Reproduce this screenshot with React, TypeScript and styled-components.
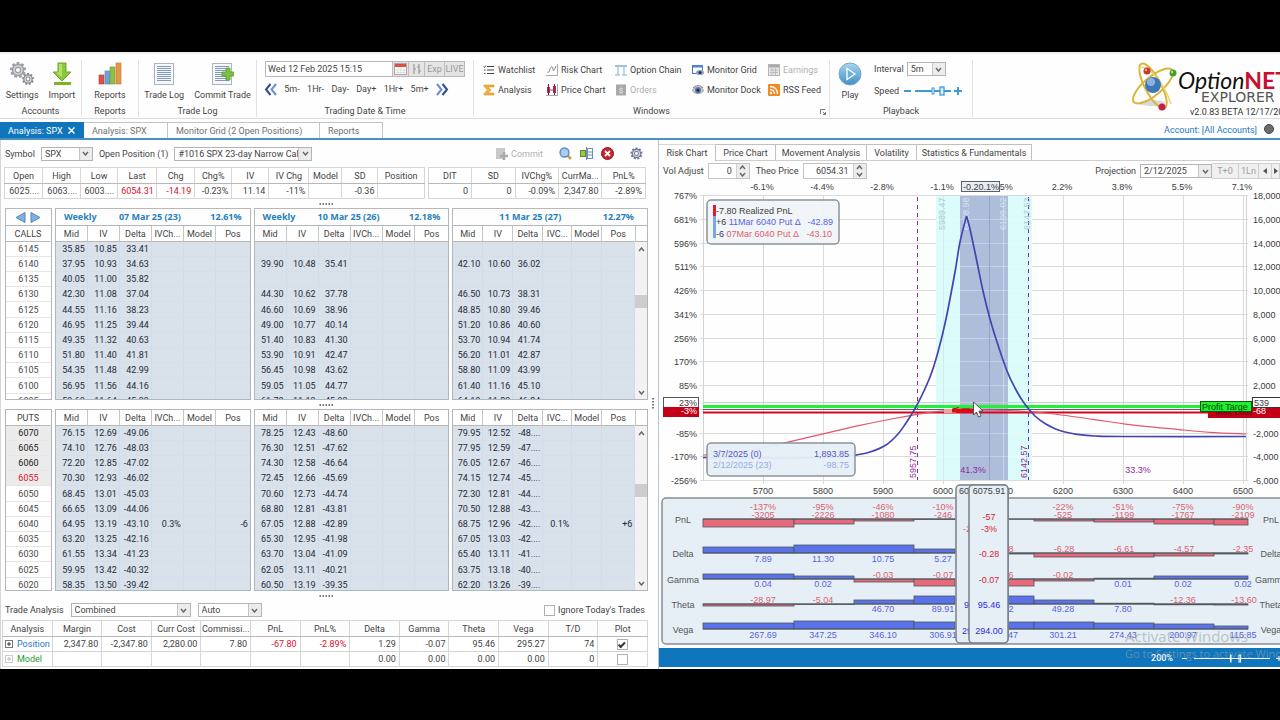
import React from 'react';
import styled, { createGlobalStyle, css } from 'styled-components';

const Global = createGlobalStyle`
  *, *::before, *::after { box-sizing: border-box; }
  body { margin: 0; background: #000; }
  body, button, input, select, table {
    font-family: Roboto, "Noto Sans", sans-serif;
    font-size: 9px;
    line-height: 12px;
    color: #444;
  }
  button { border: 0; padding: 0; margin: 0; background: none; cursor: pointer; }
  svg { display: block; flex: none; }
`;

const BLUE = '#0f76bd';

/* ---------- shell ---------- */
const Screen = styled.div`
  min-height: 100vh;
  padding: 52px 0 51px;
  background: #000;
  overflow: hidden;
`;
const Window = styled.div`
  display: flex;
  flex-direction: column;
  background: #fefefe;
  overflow: hidden;
`;

/* ---------- ribbon ---------- */
const Ribbon = styled.header`
  display: flex;
  height: 67px;
  padding-top: 8px;
  border-bottom: 1px solid #dcdcdc;
  box-shadow: inset 0 3px 0 -1px #efefef;
  overflow: hidden;
`;
const Group = styled.section<{ $w: number }>`
  flex: none;
  width: ${p => p.$w}px;
  height: 57px;
  display: flex;
  flex-direction: column;
  justify-content: space-between;
  border-right: 1px solid #e2e2e2;
  position: relative;
`;
const GroupTitle = styled.div`
  text-align: center;
  line-height: 12px;
`;
const BigRow = styled.div<{ $gap?: number }>`
  display: flex;
  justify-content: center;
  gap: ${p => p.$gap ?? 10}px;
`;
const BigButton = styled.button`
  display: flex;
  flex-direction: column;
  align-items: center;
  gap: 3px;
  white-space: nowrap;
  padding-top: 2px;
`;
const DateRow = styled.div`
  display: flex;
  height: 16px;
  margin: 1px 8px 0;
  border: 1px solid #b9b9b9;
`;
const DateInput = styled.input`
  flex: 1;
  min-width: 0;
  border: 0;
  padding: 0 2px;
  background: #fff;
`;
const DateButton = styled.button<{ $w: number }>`
  width: ${p => p.$w}px;
  display: flex;
  align-items: center;
  justify-content: center;
  background: #e4e4e4;
  border-left: 1px solid #bdbdbd;
  color: #9a9a9a;
`;
const StepRow = styled.div`
  display: flex;
  align-items: center;
  justify-content: space-between;
  padding: 0 24px 0 7px;
  height: 16px;
`;
const Stack = styled.div`
  display: flex;
  flex-direction: column;
  gap: 4px;
`;
const LinkGrid = styled.div`
  display: grid;
  grid-template-columns: 63px 69px 77px 76px auto;
  grid-auto-rows: 16px;
  row-gap: 4px;
  padding: 2px 0 0 9px;
`;
const SmallButton = styled.button<{ $off?: boolean }>`
  display: flex;
  align-items: center;
  gap: 3px;
  white-space: nowrap;
  color: ${p => (p.$off ? '#b0b0b0' : '#3f3f3f')};
`;
const Launcher = styled.button`
  position: absolute;
  right: 3px;
  bottom: 2px;
`;
const PlayBody = styled.div`
  display: flex;
  gap: 12px;
  padding-left: 8px;
`;
const Line = styled.div<{ $gap?: number }>`
  display: flex;
  align-items: center;
  gap: ${p => p.$gap ?? 4}px;
  height: 18px;
`;
const Brand = styled.div`
  margin-left: auto;
  flex: none;
  width: 150px;
  display: flex;
  overflow: hidden;
`;
const BrandText = styled.div`
  display: flex;
  flex-direction: column;
  padding: 8px 0 0 0;
  white-space: nowrap;
`;
const BrandName = styled.div`
  font: italic 23px/24px Lato, sans-serif;
  color: #111;
  b { font-style: normal; font-weight: 700; color: #c8102e; }
`;
const BrandSub = styled.div`
  font: 14px/10px "DejaVu Sans", sans-serif;
  color: #555;
  padding-left: 23px;
`;
const BrandVersion = styled.div`
  margin-top: 4px;
  padding-left: 12px;
  color: #333;
`;

/* ---------- document tabs ---------- */
const DocBar = styled.nav`
  display: flex;
  height: 21px;
  padding-top: 3px;
  border-bottom: 2px solid #4a90c0;
`;
const DocTab = styled.button<{ $w: number; $on?: boolean }>`
  width: ${p => p.$w}px;
  padding: 0 8px;
  text-align: left;
  white-space: nowrap;
  display: flex;
  align-items: center;
  justify-content: space-between;
  border: 1px solid #c4c4c4;
  border-width: 1px 1px 0 0;
  color: #707070;
  ${p => p.$on && css`background: ${BLUE}; color: #fff; border-color: ${BLUE};`}
`;
const Account = styled.a`
  margin-left: auto;
  padding-right: 7px;
  color: #2479bd;
  text-decoration: none;
  line-height: 16px;
`;
const Dot = styled.span`
  width: 10px;
  height: 10px;
  margin: 2px 6px 0 0;
  border-radius: 50%;
  background: #6d6d6d;
  border: 1px solid #444;
`;

/* ---------- work area ---------- */
const Work = styled.main`
  display: grid;
  grid-template-columns: minmax(0, 658fr) minmax(0, 622fr);
`;
const Left = styled.div`
  display: flex;
  flex-direction: column;
  padding: 0 10px 0 4px;
  position: relative;
  border-left: 1px solid #d5d5d5;
`;
const Toolbar = styled.div`
  display: flex;
  align-items: center;
  height: 27px;
  gap: 6px;
`;
const ToolActions = styled.div`
  margin-left: auto;
  display: flex;
  align-items: center;
  gap: 8px;
  padding-right: 5px;
`;
const Picker = styled.span<{ $w: number }>`
  display: inline-flex;
  position: relative;
  width: ${p => p.$w}px;
  height: 14px;
  border: 1px solid #b4b4b4;
  background: #fff;
  select {
    appearance: none;
    border: 0;
    width: 100%;
    padding: 0 13px 0 3px;
    background: transparent;
    outline: 0;
  }
`;
const PickerArrow = styled.span`
  position: absolute;
  right: 0;
  top: 0;
  bottom: 0;
  width: 13px;
  display: flex;
  align-items: center;
  justify-content: center;
  background: #ececec;
  border-left: 1px solid #c4c4c4;
  pointer-events: none;
`;
const Label = styled.label`
  white-space: nowrap;
`;

const Quotes = styled.div`
  display: grid;
  grid-template-columns: minmax(0, 420fr) minmax(0, 218fr);
  gap: 3px;
  margin: 0 2px 0 -1px;
`;
const DataTable = styled.table`
  width: 100%;
  table-layout: fixed;
  border-collapse: collapse;
  border: 1px solid #b8b8b8;
  background: #fff;
  th, td {
    height: 15px;
    padding: 0 3px;
    overflow: hidden;
    white-space: nowrap;
    border: 1px solid #d6d6d6;
    line-height: 12px;
  }
  th { height: 16px; font-weight: 400; text-align: center; padding: 0; border-bottom-color: #b8b8b8; }
  td { text-align: right; }
`;
const Red = styled.span`
  color: #e0102c;
`;
const Grip = styled.div<{ $h: number }>`
  height: ${p => p.$h}px;
  display: flex;
  align-items: center;
  justify-content: center;
`;

const Chain = styled.div`
  display: grid;
  grid-template-columns: minmax(0, 47fr) repeat(3, minmax(0, 196fr));
  column-gap: 3px;
`;
const ExpiryHead = styled.div<{ $lead: number; $end: number }>`
  height: 17px;
  display: grid;
  grid-template-columns: ${p => p.$lead}px 1fr auto;
  align-items: center;
  padding: 0 ${p => p.$end}px 0 8px;
  border: 1px solid #b8b8b8;
  border-bottom: 0;
  font-family: "Noto Sans", sans-serif;
  font-weight: 700;
  color: #2580bd;
  white-space: nowrap;
`;
const ArrowHead = styled.div`
  height: 17px;
  display: flex;
  align-items: center;
  justify-content: center;
  gap: 4px;
  border: 1px solid #b8b8b8;
  border-bottom: 0;
`;
const Clip = styled.div<{ $h: number }>`
  height: ${p => p.$h}px;
  display: flex;
  overflow: hidden;
  border: 1px solid #b0b6bd;
`;
const ChainTable = styled.table`
  flex: 1;
  min-width: 0;
  width: 100%;
  height: max-content;
  table-layout: fixed;
  border-collapse: separate;
  border-spacing: 0;
  th {
    height: 16px;
    padding: 0;
    font-weight: 400;
    white-space: nowrap;
    border-right: 1px solid #c6c6c6;
    border-bottom: 1px solid #b8b8b8;
    background: #fff;
  }
  th:last-child { border-right-color: transparent; }
  td {
    height: 15px;
    padding: 0 2px 0 0;
    text-align: right;
    white-space: nowrap;
    color: #1f2a36;
    background: #d9e1eb;
    border-right: 1px solid #d3dbe6;
    border-bottom: 1px solid #d6dee8;
  }
  tr:nth-child(5n) td { height: 16px; }
`;
const StrikeCell = styled.td<{ $tone: string }>`
  && {
    text-align: center;
    padding: 0;
    color: ${p => (p.$tone === 'atm' ? '#e0102c' : p.$tone === 'itm' ? '#222' : '#4a4a4a')};
    background: ${p => (p.$tone === 'plain' ? '#fff' : '#ebebeb')};
    border-color: #e6e6e6;
    border-right: 0;
  }
`;
const Scroll = styled.div`
  flex: none;
  width: 13px;
  display: flex;
  flex-direction: column;
  align-items: center;
  background: #f2f2f2;
`;
const ScrollHead = styled.div`
  width: 13px;
  height: 16px;
  background: #fff;
  border-left: 1px solid #c6c6c6;
  border-bottom: 1px solid #b8b8b8;
`;
const ScrollButton = styled.button`
  width: 13px;
  height: 14px;
  display: flex;
  align-items: center;
  justify-content: center;
`;
const ScrollTrack = styled.div<{ $before: number }>`
  flex: 1;
  width: 13px;
  padding-top: ${p => p.$before}px;
  &::before { content: ""; display: block; height: 13px; background: #cdcdcd; }
`;
const SideGrip = styled.div`
  position: absolute;
  right: 4px;
  top: 258px;
`;
const AnalysisBar = styled.div`
  display: flex;
  align-items: center;
  height: 20px;
  gap: 7px;
`;
const Ignore = styled.label`
  margin-left: auto;
  padding-right: 3px;
  display: flex;
  align-items: center;
  gap: 3px;
`;
const Check = styled.input`
  appearance: none;
  margin: 0;
  width: 11px;
  height: 11px;
  border: 1px solid #b0b0b0;
  background: #fff;
  display: inline-flex;
  align-items: center;
  justify-content: center;
  vertical-align: middle;
  &:checked::after {
    content: "";
    width: 7px;
    height: 4px;
    border: solid #333;
    border-width: 0 0 2px 2px;
    transform: rotate(-45deg) translate(0, -1px);
  }
`;
const AnalysisWrap = styled.div`
  margin: 0 0 1px -3px;
  th { background: #fdfdfd; }
  td:last-child { text-align: center; padding: 0; }
  td:first-child { text-align: left; padding: 0 2px; }
`;
const NameCell = styled.span<{ $c: string }>`
  display: flex;
  align-items: center;
  gap: 4px;
  color: ${p => p.$c};
`;

/* ---------- right pane ---------- */
const Right = styled.div`
  display: flex;
  flex-direction: column;
  border-left: 1px solid #b8c4ce;
  overflow: hidden;
`;
const PaneTabs = styled.div`
  height: 21px;
  padding-top: 4px;
  display: flex;
  border-bottom: 1px solid #cfcfcf;
`;
const PaneTab = styled.button<{ $w: number; $on?: boolean }>`
  width: ${p => p.$w}px;
  white-space: nowrap;
  border: 1px solid #c0c0c0;
  border-width: 1px 1px 0 0;
  ${p => p.$on && css`margin-bottom: -1px; background: #fefefe; border-color: #d8d8d8 #c0c0c0;`}
`;
const Controls = styled.div`
  display: flex;
  align-items: center;
  height: 20px;
  padding-left: 4px;
  white-space: nowrap;
  overflow: hidden;
`;
const Spin = styled.span<{ $w: number }>`
  display: inline-flex;
  width: ${p => p.$w}px;
  flex: none;
  height: 16px;
  margin: 0 6px 0 4px;
  border: 1px solid #c4c4c4;
  input { flex: 1; min-width: 0; border: 0; padding: 0 4px; text-align: right; background: #fff; }
`;
const SpinArrows = styled.span`
  width: 13px;
  display: flex;
  flex-direction: column;
  align-items: center;
  justify-content: space-evenly;
  background: #ececec;
  border-left: 1px solid #d0d0d0;
`;
const Projection = styled.div`
  margin-left: auto;
  display: flex;
  align-items: center;
  flex: none;
`;
const FlatButton = styled.button<{ $w: number }>`
  width: ${p => p.$w}px;
  height: 16px;
  display: flex;
  align-items: center;
  justify-content: center;
  background: #f0f0f0;
  border: 1px solid #d0d0d0;
  border-left: 0;
  color: #a0a0a0;
`;
const ChartSvg = styled.svg`
  width: 100%;
  height: auto;
  font-family: "Liberation Sans", Arial, sans-serif;
  font-size: 9px;
`;
const StatusBar = styled.footer`
  position: relative;
  height: 19px;
  margin-bottom: 2px;
  background: ${BLUE};
  color: #fff;
  display: flex;
  align-items: center;
  justify-content: flex-end;
  gap: 9px;
  font-weight: 500;
`;
const Watermark = styled.div`
  position: absolute;
  left: 466px;
  bottom: 5px;
  color: rgba(150, 160, 168, 0.6);
  font: 11px/16px "Open Sans", sans-serif;
  white-space: nowrap;
  pointer-events: none;
  strong { display: block; font: 15px/20px "Open Sans", sans-serif; }
`;

/* ---------- small icons ---------- */
const Chevron = ({ up }: { up?: boolean }) => (
  <svg width="7" height="5" viewBox="0 0 7 5">
    <path d={up ? 'M1 4 3.5 1 6 4' : 'M1 1 3.5 4 6 1'} fill="none" stroke="#666" strokeWidth="1.4" />
  </svg>
);
const gearTeeth = (r: number, n: number) =>
  Array.from({ length: n }, (_, i) => (
    <rect key={i} x={-r * 0.18} y={-r} width={r * 0.36} height={r * 0.5} transform={`rotate(${(360 / n) * i})`} />
  ));
const Gear = ({ x, y, r, fill = '#9b9fa3' }: { x: number; y: number; r: number; fill?: string }) => (
  <g transform={`translate(${x} ${y})`} fill={fill}>
    {gearTeeth(r, 9)}
    <circle r={r * 0.78} />
    <circle r={r * 0.6} fill="#d3d6d9" />
    <circle r={r * 0.4} fill={fill} />
    <circle r={r * 0.24} fill="#fff" />
  </g>
);
const GearsIcon = () => (
  <svg width="24" height="24"><Gear x={8} y={8} r={8} /><Gear x={18} y={17} r={6} fill="#8b8f93" /></svg>
);
const ImportIcon = () => (
  <svg width="24" height="24">
    <path d="M8 1h8v9h5l-9 9-9-9h5z" fill="#8cc63a" stroke="#6fa526" />
    <path d="M9 2h3v13L6 10.500h3z" fill="#b6df6c" />
    <rect x="4" y="20" width="17" height="3" fill="#79b52a" />
  </svg>
);
const BarsIcon = () => (
  <svg width="24" height="24">
    <rect x="1" y="13" width="5" height="9" fill="#d9534a" stroke="#b53a34" strokeWidth=".6" />
    <rect x="7" y="9" width="5" height="13" fill="#6fa3d8" stroke="#4d80b8" strokeWidth=".6" />
    <rect x="12" y="5" width="5" height="17" fill="#8fbf45" stroke="#6d9a2b" strokeWidth=".6" />
    <rect x="18" y="1" width="5" height="21" fill="#e8954a" stroke="#c67228" strokeWidth=".6" />
  </svg>
);
const DocIcon = ({ plus }: { plus?: boolean }) => (
  <svg width="24" height="24">
    <rect x="2.500" y="1.500" width="19" height="21" fill="#f6f8fb" stroke="#a9b4c4" />
    {[4, 6, 8, 10, 12, 14, 16, 18].map(y => <rect key={y} x="5" y={y} width="14" height="1" fill="#8198bd" />)}
    {plus && <path d="M16 6h4v4h4v4h-4v4h-4v-4h-4v-4h4z" fill="#7cc142" stroke="#5a9c26" strokeWidth=".8" />}
  </svg>
);
const CalendarIcon = () => (
  <svg width="13" height="12"><rect x=".5" y=".5" width="12" height="11" fill="#fff" stroke="#b9a0a0" /><rect x="1" y="1" width="11" height="3" fill="#d8503f" /><path d="M1 7h11M1 9.500h11M4 5v6M7 5v6M10 5v6" stroke="#ccc" strokeWidth=".6" /></svg>
);
const CandlesIcon = () => (
  <svg width="11" height="12"><path d="M3 1v10M3 6h2M8 1v10M6 4h2M8 8h2" stroke="#999" strokeWidth="1.200" /></svg>
);
const DoubleChevron = ({ right }: { right?: boolean }) => (
  <svg width="13" height="13" viewBox="0 0 13 13">
    <g fill="none" strokeWidth="2" transform={right ? 'rotate(180 6.500 6.500)' : undefined}>
      <path d="M6.500 1 2 6.500l4.500 5.500" stroke="#31489c" /><path d="M12 1 7.500 6.500 12 12" stroke="#6b8fc6" />
    </g>
  </svg>
);
const I = ({ children }: { children: React.ReactNode }) => <svg width="12" height="12" viewBox="0 0 12 12">{children}</svg>;
const icons: Record<string, React.ReactNode> = {
  Watchlist: <I><path d="M4 2.500h7M4 6h7M4 9.500h7" stroke="#444" strokeWidth="1.200" /><path d="M.5 2.500 1.500 3.500 3 1.500M1 6h1.500M1 9.500h1.500" stroke="#444" fill="none" /></I>,
  'Risk Chart': <I><path d="M11.500 0v11.500H0" fill="none" stroke="#aaa" /><path d="M1 8c2 1 2 0 3-3s3-3 3 0 1 2 3-3" fill="none" stroke="#888" /></I>,
  'Option Chain': <I><rect y="1" width="12" height="2" fill="#9cc3dd" /><path d="M3 3v8M9 3v8M0 11h5M7 11h5" stroke="#a9c8dc" strokeWidth="1.500" /></I>,
  'Monitor Grid': <I><rect x=".5" y="1.500" width="10" height="8" fill="#fff" stroke="#4579b8" /><rect x="1" y="1" width="10" height="2.500" fill="#4d86c6" /><ellipse cx="8" cy="8.500" rx="4" ry="2.600" fill="#8fa7c6" /><circle cx="8" cy="8.500" r="1.600" fill="#23344f" /></I>,
  Earnings: <I><rect x=".5" y=".5" width="11" height="11" fill="#e6e6e6" stroke="#b5b5b5" /><rect x="1" y="1" width="10" height="2.500" fill="#a9a9a9" /><path d="M2 6h8M2 8.500h8M4 4v7M7.500 4v7" stroke="#bbb" /></I>,
  Analysis: <I><path d="M1 1h10v2H5l3 3-3 3h6v2H1V9.500L4.500 6 1 2.500z" fill="#f0b03e" stroke="#d99320" strokeWidth=".6" /></I>,
  'Price Chart': <I><path d="M0 11.500h12M11.500 0v12" stroke="#aaa" /><rect x="1" y="3" width="3" height="6" fill="#c22a52" /><path d="M2.500 0v11M8.500 0v11" stroke="#7b2041" /><rect x="7" y="2" width="3" height="7" fill="#b3214c" /><path d="M4 6h3" stroke="#3d65a8" /></I>,
  Orders: <I><rect x="1" y=".5" width="10" height="11" fill="#a9a9a9" /><text x="6" y="9" fontSize="8" textAnchor="middle" fill="#e8e8e8">$</text></I>,
  'Monitor Dock': <I><path d="M0 6.500C3 2 9 2 12 6.500 9 10.500 3 10.500 0 6.500z" fill="#c8cdd8" stroke="#7a7f8c" strokeWidth=".7" /><circle cx="6" cy="6.200" r="3" fill="#5573b0" /><circle cx="6" cy="6.200" r="1.300" fill="#1c2538" /><path d="M1 4C4 1 8 1 11 4" fill="none" stroke="#77706c" /></I>,
  'RSS Feed': <I><rect width="12" height="12" rx="1" fill="#f08a24" /><circle cx="3" cy="9" r="1.200" fill="#fff" /><path d="M2 5.500c2.500 0 4.500 2 4.500 4.500M2 2.500c4.500 0 7.500 3 7.500 7.500" fill="none" stroke="#fff" strokeWidth="1.300" /></I>,
};
const PlayIcon = () => (
  <svg width="24" height="24">
    <defs><linearGradient id="pl" x1="0" y1="0" x2="0" y2="1"><stop offset="0" stopColor="#a9d5ee" /><stop offset="1" stopColor="#3f8fc6" /></linearGradient></defs>
    <circle cx="12" cy="12" r="11" fill="url(#pl)" stroke="#7fa9c4" /><path d="M9 6.500 17 12l-8 5.500z" fill="#6bb0dc" stroke="#fff" strokeWidth="1.300" />
  </svg>
);
const SpeedSlider = () => (
  <svg width="60" height="10" fill="none" stroke="#3f9bd6">
    <path d="M1 5h7" strokeWidth="2" /><path d="M12 5h36" strokeWidth="2" />
    <rect x="29" y="2" width="2" height="6" fill="#fff" /><rect x="37" y="1" width="4" height="8" fill="#d8ecf8" strokeWidth="1.300" />
    <path d="M51 5h8M55 1v8" strokeWidth="2" />
  </svg>
);
const Atom = () => (
  <svg width="48" height="54" viewBox="0 0 48 54" fill="none">
    <ellipse cx="22" cy="43" rx="13" ry="3" fill="#d9d9d9" />
    <g stroke="#d9b53a" strokeWidth="2">
      <ellipse cx="23" cy="26" rx="25" ry="9" transform="rotate(-40 23 26)" />
      <ellipse cx="23" cy="26" rx="25" ry="8" transform="rotate(62 23 26)" />
      <path d="M9 9C15 1 34 22 41 44" stroke="#eed56c" strokeWidth="1.500" />
    </g>
    <circle cx="23" cy="25" r="8" fill="#3f78b8" /><circle cx="21" cy="22" r="4" fill="#8ab4de" />
    <circle cx="17" cy="11" r="3.500" fill="#c5382c" /><circle cx="43" cy="13" r="3.500" fill="#48a02c" /><circle cx="32" cy="47" r="3.500" fill="#c41e4a" />
    <circle cx="16" cy="10" r="1.200" fill="#f0a59e" /><circle cx="42" cy="12" r="1.200" fill="#b3e09e" />
  </svg>
);
const Dots = () => (
  <svg width="16" height="2">{[0, 3, 6, 9, 12].map(x => <rect key={x} x={x + 0.5} width="1.500" height="2" fill="#777" />)}</svg>
);
const Expander = ({ dim }: { dim?: boolean }) => (
  <svg width="8" height="8"><rect x=".5" y=".5" width="7" height="7" fill="#fff" stroke={dim ? '#ccc' : '#777'} /><path d="M2 4h4M4 2v4" stroke={dim ? '#bbb' : '#333'} /></svg>
);

/* ---------- data ---------- */
type Row = [number, string[], string[], string[]];
const s = (t: string) => (t ? t.split(' ') : []);
const calls: Row[] = [
  [6145, s('35.85 10.85 33.41'), s(''), s('')],
  [6140, s('37.95 10.93 34.63'), s('39.90 10.48 35.41'), s('42.10 10.60 36.02')],
  [6135, s('40.05 11.00 35.82'), s(''), s('')],
  [6130, s('42.30 11.08 37.04'), s('44.30 10.62 37.78'), s('46.50 10.73 38.31')],
  [6125, s('44.55 11.16 38.23'), s('46.60 10.69 38.96'), s('48.85 10.80 39.46')],
  [6120, s('46.95 11.25 39.44'), s('49.00 10.77 40.14'), s('51.20 10.86 40.60')],
  [6115, s('49.35 11.32 40.63'), s('51.40 10.83 41.30'), s('53.70 10.94 41.74')],
  [6110, s('51.80 11.40 41.81'), s('53.90 10.91 42.47'), s('56.20 11.01 42.87')],
  [6105, s('54.35 11.48 42.99'), s('56.45 10.98 43.62'), s('58.80 11.09 43.99')],
  [6100, s('56.95 11.56 44.16'), s('59.05 11.05 44.77'), s('61.40 11.16 45.10')],
  [6095, s('59.60 11.64 45.33'), s('61.70 11.13 45.93'), s('64.10 11.23 46.24')],
];
const puts: Row[] = [
  [6070, s('76.15 12.69 -49.06'), s('78.25 12.43 -48.60'), s('79.95 12.52 -48....')],
  [6065, s('74.10 12.76 -48.03'), s('76.30 12.51 -47.62'), s('77.95 12.59 -47....')],
  [6060, s('72.20 12.85 -47.02'), s('74.30 12.58 -46.64'), s('76.05 12.67 -46....')],
  [6055, s('70.30 12.93 -46.02'), s('72.45 12.66 -45.69'), s('74.15 12.74 -45....')],
  [6050, s('68.45 13.01 -45.03'), s('70.60 12.73 -44.74'), s('72.30 12.81 -44....')],
  [6045, s('66.65 13.09 -44.06'), s('68.80 12.81 -43.81'), s('70.50 12.88 -43....')],
  [6040, ['64.95', '13.19', '-43.10', '0.3%', '', '-6'], s('67.05 12.88 -42.89'), ['68.75', '12.96', '-42....', '0.1%', '', '+6']],
  [6035, s('63.20 13.25 -42.16'), s('65.30 12.95 -41.98'), s('67.05 13.03 -42....')],
  [6030, s('61.55 13.34 -41.23'), s('63.70 13.04 -41.09'), s('65.40 13.11 -41....')],
  [6025, s('59.95 13.42 -40.32'), s('62.05 13.11 -40.21'), s('63.75 13.18 -40....')],
  [6020, s('58.35 13.50 -39.42'), s('60.50 13.19 -39.35'), s('62.20 13.26 -39....')],
];

const Strikes = ({ title, rows, h }: { title: string; rows: Row[]; h: number }) => (
  <Clip $h={h}>
    <ChainTable>
      <thead><tr><th>{title}</th></tr></thead>
      <tbody>
        {rows.map(([k]) => (
          <tr key={k}>
            <StrikeCell $tone={title === 'CALLS' || k < 6055 ? 'plain' : k === 6055 ? 'atm' : 'itm'}>{k}</StrikeCell>
          </tr>
        ))}
      </tbody>
    </ChainTable>
  </Clip>
);
const Legs = ({ rows, i, h, before }: { rows: Row[]; i: 1 | 2 | 3; h: number; before: number }) => (
  <Clip $h={h}>
    <ChainTable>
      <colgroup>{(i === 3 ? [30, 30, 30, 29, 30, 33] : [32, 32, 32, 32, 32, 35]).map((w, n) => <col key={n} style={{ width: w }} />)}</colgroup>
      <thead><tr>{['Mid', 'IV', 'Delta', i === 3 ? 'IVC...' : 'IVCh...', 'Model', 'Pos'].map(t => <th key={t}>{t}</th>)}</tr></thead>
      <tbody>
        {rows.map(r => <tr key={r[0]}>{[0, 1, 2, 3, 4, 5].map(c => <td key={c}>{r[i][c] ?? ''}</td>)}</tr>)}
      </tbody>
    </ChainTable>
    {i === 3 && (
      <Scroll>
        <ScrollHead />
        <ScrollButton aria-label="Scroll up"><Chevron up /></ScrollButton>
        <ScrollTrack $before={before} />
        <ScrollButton aria-label="Scroll down"><Chevron /></ScrollButton>
      </Scroll>
    )}
  </Clip>
);
const Select = ({ id, w, value }: { id: string; w: number; value: string }) => (
  <Picker $w={w}>
    <select id={id} aria-label={value}><option>{value}</option></select>
    <PickerArrow><Chevron /></PickerArrow>
  </Picker>
);

/* ---------- chart ---------- */
const gridY = [195, 219, 243, 266, 290, 314, 338, 361, 385, 409, 433, 456, 480];
const leftAxis = ['767%', '681%', '596%', '511%', '426%', '341%', '256%', '170%', '85%', '', '-85%', '-170%', '-256%'];
const rightAxis = ['18,000', '16,000', '14,000', '12,000', '10,000', '8,000', '6,000', '4,000', '2,000', '', '-2,000', '-4,000', '-6,000'];
const gridX = [763, 823, 883, 943, 1003, 1063, 1123, 1183, 1243];
const INK = '#3c3c3c', POS = '#5a5fe0', NEG = '#dd5f70', PURPLE = '#8d2a95';

/* smooth curve through the points (Catmull-Rom converted to Bezier segments) */
const smooth = (p: number[][]) =>
  p.slice(1).reduce((d, [x, y], i) => {
    const a = p[Math.max(i - 1, 0)], b = p[i], e = p[Math.min(i + 2, p.length - 1)];
    return `${d}C${b[0] + (x - a[0]) / 6} ${b[1] + (y - a[1]) / 6} ${x - (e[0] - b[0]) / 6} ${y - (e[1] - b[1]) / 6} ${x} ${y}`;
  }, `M${p[0][0]} ${p[0][1]}`);

const expiryLeft = [[703, 457.5], [780, 458], [835, 457], [854, 455.3], [870, 452], [886, 445], [898, 434], [906, 423], [917, 405], [930, 377], [938, 352], [946, 319], [955, 272], [960, 242], [966.5, 216]];
const expiryRight = [[966.5, 216], [970, 229], [977, 262], [983, 291], [990, 319], [997, 342], [1007, 371], [1015, 388], [1024, 403], [1035, 416], [1045, 423.5], [1055, 428.7], [1065, 432], [1077, 434.3], [1095, 436], [1125, 436.5], [1246, 436.5]];
const today = [[703, 455], [745, 451], [790, 441.7], [854, 426.7], [894, 418.5], [930, 412.3], [950, 410.5], [975, 409.8], [1010, 410.5], [1045, 413], [1093, 419.3], [1127, 424.3], [1177, 429.3], [1210, 432.3], [1246, 434]];

const T = ({ x, y, c = INK, a = 'middle', v, children }: { x: number; y: number; c?: string; a?: 'start' | 'middle' | 'end'; v?: boolean; children: React.ReactNode }) => (
  <text x={x} y={y} fill={c} textAnchor={a} transform={v ? `rotate(-90 ${x} ${y})` : undefined}>{children}</text>
);

/* bars: [from, to, signed height]; values: [x, text, y, positive] */
const greeks: { name: string; base: number; bars: number[][]; vals: [number, string, number, boolean][] }[] = [
  { name: 'PnL', base: 519, bars: [[703, 794, -8], [794, 854, -5], [854, 914, -2], [914, 955, -0.5], [1008, 1034, -0.2], [1034, 1094, -2], [1094, 1154, -3], [1154, 1214, -5], [1214, 1248, -6]],
    vals: [[763, '-137%', 510, false], [823, '-95%', 510, false], [883, '-46%', 510, false], [943, '-10%', 510, false], [1063, '-22%', 510, false], [1123, '-51%', 510, false], [1183, '-75%', 510, false], [1243, '-90%', 510, false],
      [763, '-3205', 518, false], [823, '-2226', 518, false], [883, '-1080', 518, false], [943, '-246', 518, false], [1063, '-525', 518, false], [1123, '-1199', 518, false], [1183, '-1767', 518, false], [1243, '-2109', 518, false]] },
  { name: 'Delta', base: 553, bars: [[703, 794, 6], [794, 914, 8], [914, 955, 4], [1008, 1034, -1], [1034, 1154, -4], [1154, 1214, -3], [1214, 1248, -1]],
    vals: [[763, '7.89', 562, true], [823, '11.30', 562, true], [883, '10.75', 562, true], [943, '5.27', 562, true], [1011, '8', 552, false], [1064, '-6.28', 552, false], [1124, '-6.61', 552, false], [1184, '-4.57', 552, false], [1243, '-2.35', 552, false]] },
  { name: 'Gamma', base: 579, bars: [[703, 794, 5], [794, 854, 3], [854, 914, -3], [914, 955, -7], [1008, 1034, -7], [1034, 1094, -2], [1094, 1154, 0.8], [1154, 1248, 3]],
    vals: [[763, '0.04', 587, true], [823, '0.02', 587, true], [883, '-0.03', 578, false], [943, '-0.07', 578, false], [1011, '6', 578, false], [1063, '-0.02', 578, false], [1123, '0.01', 587, true], [1183, '0.02', 587, true], [1243, '0.02', 587, true]] },
  { name: 'Theta', base: 604, bars: [[703, 794, -2], [794, 854, -0.5], [854, 914, 4], [914, 955, 8], [1008, 1034, 8], [1034, 1094, 4], [1094, 1154, 0.8], [1154, 1214, -0.8], [1214, 1248, -1]],
    vals: [[763, '-28.97', 603, false], [823, '-5.04', 603, false], [883, '46.70', 612, true], [943, '89.91', 612, true], [1011, '2', 612, true], [1063, '49.28', 612, true], [1123, '7.80', 612, true], [1183, '-12.36', 603, false], [1244, '-13.60', 603, false]] },
  { name: 'Vega', base: 629, bars: [[703, 794, 6], [794, 914, 8], [914, 955, 7], [1008, 1034, 7], [1034, 1094, 7], [1094, 1154, 6], [1154, 1214, 5], [1214, 1248, 3]],
    vals: [[763, '267.69', 638, true], [823, '347.25', 638, true], [883, '346.10', 638, true], [943, '306.91', 638, true], [1013, '47', 638, true], [1063, '301.21', 638, true], [1123, '274.43', 638, true], [1183, '200.97', 638, true], [1243, '115.85', 638, true]] },
];

const RiskChart = () => (
  <ChartSvg viewBox="659 181 621 467" role="img" aria-label="Risk chart">
    {gridX.map((x, i) => (i === 4 ? null : <path key={x} d={`M${x}.5 195V484`} stroke="#dadada" />))}
    {gridY.map(y => <path key={y} d={`M700 ${y}.5H1248`} stroke="#dadada" />)}
    <path d="M703.500 195v286M1246.500 195v286" stroke="#d2d2d2" />
    <rect x="936" y="196" width="96" height="284" fill="#dcfbfb" />
    <rect x="960" y="196" width="48" height="284" fill="#aebeda" />
    {gridY.slice(1, 12).map(y => <path key={y} d={`M936 ${y}.5H1032`} stroke="#fff" strokeOpacity=".3" />)}
    <path d="M943.500 196v284M1003.500 196v284" stroke="#c9e4e6" strokeOpacity=".7" />
    <path d="M989.500 196v284" stroke="#94a3bf" />
    <path d="M917.500 197v283M1028.500 197v283" stroke={PURPLE} strokeDasharray="4 4" />

    {[762, 822, 882, 942].map((x, i) => <T key={x} x={x} y={190}>{['-6.1%', '-4.4%', '-2.8%', '-1.1%'][i]}</T>)}
    <T x={1005} y={190}>.5%</T>
    {[1062, 1122, 1182, 1242].map((x, i) => <T key={x} x={x} y={190}>{['2.2%', '3.8%', '5.5%', '7.1%'][i]}</T>)}
    <rect x="961.500" y="181.500" width="38" height="10" fill="#e4ebf2" fillOpacity=".9" stroke="#5a6068" />
    <T x={963} y={190} a="start">-0.20.1%</T>
    {gridY.map((y, i) => <T key={y} x={697} y={y + 4} a="end">{leftAxis[i]}</T>)}
    {gridY.map((y, i) => <T key={y} x={1253} y={y + 4} a="start">{rightAxis[i]}</T>)}
    {gridX.map((x, i) => <T key={x} x={x} y={494}>{5700 + i * 100}</T>)}

    <T x={945} y={230} c="#a5cfd2" a="start" v>5989.47</T>
    <T x={969} y={230} c="#d5e4f2" a="start" v>6038.98</T>
    <T x={1006} y={230} c="#d5e4f2" a="start" v>6109.02</T>
    <T x={1030} y={230} c="#a5cfd2" a="start" v>6147.53</T>
    <T x={916} y={478} c={PURPLE} a="start" v>5957.75</T>
    <T x={1027} y={478} c={PURPLE} a="start" v>6142.57</T>
    <T x={973} y={473} c={PURPLE}>41.3%</T>
    <T x={1138} y={473} c={PURPLE}>33.3%</T>

    <path d="M703 402.500H1246" stroke="#c9d6c9" />
    <path d="M703 406.500H1201" stroke="#22f03a" strokeWidth="3" />
    <path d="M703 409.500H1201" stroke="#56605c" />
    <path d="M703 412.500H1246" stroke="#d4061c" strokeWidth="2" />
    <path d={smooth(today)} fill="none" stroke="#e0586a" strokeWidth="1.200" />
    <path d={smooth(expiryLeft)} fill="none" stroke="#4444b2" strokeWidth="1.700" />
    <path d={smooth(expiryRight)} fill="none" stroke="#4444b2" strokeWidth="1.700" />
    <path d="M944 411h12" stroke="#f3a49a" strokeWidth="4" />
    <path d="M952 410.500h24" stroke="#e00a14" strokeWidth="4" />
    <path d="M953 409l6-1.500M962 409h8" stroke="#7a2a00" />

    <rect x="663.500" y="397.500" width="35" height="10" fill="#fff" stroke="#555" />
    <rect x="663" y="407" width="36" height="10" fill="#c50016" />
    <T x={697} y={406} a="end">23%</T>
    <T x={697} y={414} a="end" c="#fff">-3%</T>
    <rect x="1208" y="408" width="72" height="10" fill="#c00014" />
    <T x={1215} y={415} a="start" c="#5d0009">Max Loss</T>
    <rect x="1200.500" y="401.500" width="51" height="10" fill="#1ff02e" stroke="#0b5a10" />
    <T x={1202} y={410} a="start" c="#06420a">Profit Targe</T>
    <rect x="1252" y="405" width="28" height="11" fill="#c50016" />
    <T x={1253} y={414} a="start" c="#fff">-68</T>
    <rect x="1252.500" y="397.500" width="30" height="10" fill="#fff" stroke="#333" />
    <T x={1254} y={406} a="start">539</T>

    <rect x="707" y="200" width="132" height="44" rx="4" fill="#f0f4f7" fillOpacity=".95" stroke="#8b949b" strokeWidth="1.500" />
    <rect x="713" y="205" width="3" height="11" fill="#e01b2c" /><rect x="713" y="216" width="3" height="22" fill="#7ea6e6" />
    <T x={716} y={214} a="start">-7.80 Realized PnL</T>
    <T x={716} y={225} a="start">+6 <tspan fill={POS}>11Mar 6040 Put Δ</tspan></T>
    <T x={833} y={225} a="end" c={POS}>-42.89</T>
    <T x={716} y={237} a="start">-6 <tspan fill={NEG}>07Mar 6040 Put Δ</tspan></T>
    <T x={832} y={237} a="end" c={NEG}>-43.10</T>

    <rect x="707" y="443" width="148" height="33" rx="4" fill="#e6eff7" fillOpacity=".95" stroke="#8b949b" strokeWidth="1.500" />
    <T x={713} y={457} a="start" c="#5057c4">3/7/2025 (0)</T>
    <T x={849} y={457} a="end" c="#5057c4">1,893.85</T>
    <T x={713} y={468} a="start" c="#96aae6">2/12/2025 (23)</T>
    <T x={849} y={468} a="end" c="#96aae6">-98.75</T>

    <rect x="662" y="498" width="630" height="146" rx="4" fill="#e6eff5" stroke="#868d93" strokeWidth="1.500" />
    {greeks.map(g => (
      <g key={g.name}>
        {g.bars.map(([a, b, h]) => (
          <rect key={a} x={a} y={h > 0 ? g.base - h : g.base} width={b - a} height={Math.abs(h)} fill={h > 0 ? '#5b73ea' : '#e8697a'} stroke="#4e565e" strokeWidth=".8" />
        ))}
        <path d={`M703 ${g.base}H955M1008 ${g.base}H1248`} stroke="#4e565e" />
        <T x={683} y={g.base + 4} c="#555">{g.name}</T>
        <T x={1271} y={g.base + 4} c="#555">{g.name}</T>
        {g.vals.map(([x, t, y, up]) => <T key={`${x}-${t}`} x={x} y={y} c={up ? POS : NEG}>{t}</T>)}
      </g>
    ))}
    <rect x="956" y="485" width="52" height="158" rx="4" fill="#e4edf4" stroke="#777f86" strokeWidth="1.500" />
    <T x={959} y={494} a="start">60</T>
    <T x={963} y={532} a="start" c={NEG}>-2</T>
    <T x={964} y={608} a="start" c="#2b2be0">9</T>
    <T x={962} y={634} a="start" c="#2b2be0">29</T>
    <rect x="969" y="485" width="39" height="158" rx="4" fill="#e6eff5" stroke="#777f86" strokeWidth="1.500" />
    <T x={989} y={494}>6075.91</T>
    {([['-57', 520], ['-3%', 532], ['-0.28', 557], ['-0.07', 583]] as [string, number][]).map(([t, y]) => <T key={t} x={989} y={y} c="#d81c34">{t}</T>)}
    <T x={989} y={608} c="#2b2be0">95.46</T>
    <T x={989} y={634} c="#2b2be0">294.00</T>
    <path d="M973.500 402v13l3-3 2 5 2.500-1-2-5h4z" fill="#fff" stroke="#333" strokeWidth=".8" />
  </ChartSvg>
);

export default function App() {
  const analysisHead = ['Analysis', 'Margin', 'Cost', 'Curr Cost', 'Commissi...', 'PnL', 'PnL%', 'Delta', 'Gamma', 'Theta', 'Vega', 'T/D', 'Plot'];
  return (
    <>
      <Global />
      <Screen>
        <Window>
          <Ribbon>
            <Group $w={82}>
              <BigRow><BigButton><GearsIcon />Settings</BigButton><BigButton><ImportIcon />Import</BigButton></BigRow>
              <GroupTitle>Accounts</GroupTitle>
            </Group>
            <Group $w={57}>
              <BigRow><BigButton><BarsIcon />Reports</BigButton></BigRow>
              <GroupTitle>Reports</GroupTitle>
            </Group>
            <Group $w={118}>
              <BigRow><BigButton><DocIcon />Trade Log</BigButton><BigButton><DocIcon plus />Commit Trade</BigButton></BigRow>
              <GroupTitle>Trade Log</GroupTitle>
            </Group>
            <Group $w={217}>
              <Stack>
                <DateRow>
                  <DateInput aria-label="Trading date" defaultValue="Wed 12 Feb 2025 15:15" />
                  <DateButton $w={16} aria-label="Calendar"><CalendarIcon /></DateButton>
                  <DateButton $w={16} aria-label="Bars"><CandlesIcon /></DateButton>
                  <DateButton $w={20}>Exp</DateButton>
                  <DateButton $w={20}>LIVE</DateButton>
                </DateRow>
                <StepRow>
                  <button aria-label="Back"><DoubleChevron /></button>
                  {['5m-', '1Hr-', 'Day-', 'Day+', '1Hr+', '5m+'].map(t => <button key={t}>{t}</button>)}
                  <button aria-label="Forward"><DoubleChevron right /></button>
                </StepRow>
              </Stack>
              <GroupTitle>Trading Date &amp; Time</GroupTitle>
            </Group>
            <Group $w={356}>
              <LinkGrid>
                {['Watchlist', 'Risk Chart', 'Option Chain', 'Monitor Grid', 'Earnings', 'Analysis', 'Price Chart', 'Orders', 'Monitor Dock', 'RSS Feed'].map(t => (
                  <SmallButton key={t} $off={t === 'Earnings' || t === 'Orders'}>{icons[t]}{t}</SmallButton>
                ))}
              </LinkGrid>
              <GroupTitle>Windows</GroupTitle>
              <Launcher aria-label="Window options"><svg width="6" height="6"><path d="M.5 5V.5H5M3 3l2.500 2.500M5.500 3v2.500H3" fill="none" stroke="#777" /></svg></Launcher>
            </Group>
            <Group $w={143}>
              <PlayBody>
                <BigButton><PlayIcon />Play</BigButton>
                <Stack>
                  <Line $gap={3}><Label htmlFor="interval">Interval</Label><Select id="interval" w={39} value="5m" /></Line>
                  <Line $gap={4}><span>Speed</span><SpeedSlider /></Line>
                </Stack>
              </PlayBody>
              <GroupTitle>Playback</GroupTitle>
            </Group>
            <Brand>
              <Atom />
              <BrandText>
                <BrandName>Option<b>NET</b></BrandName>
                <BrandSub>EXPLORER</BrandSub>
                <BrandVersion>v2.0.83 BETA 12/17/2024</BrandVersion>
              </BrandText>
            </Brand>
          </Ribbon>

          <DocBar>
            <DocTab $w={84} $on>Analysis: SPX<svg width="7" height="7"><path d="M.5.5l6 6M6.500.5l-6 6" stroke="#fff" strokeWidth="1.500" /></svg></DocTab>
            <DocTab $w={84}>Analysis: SPX</DocTab>
            <DocTab $w={152}>Monitor Grid (2 Open Positions)</DocTab>
            <DocTab $w={63}>Reports</DocTab>
            <Account href="#accounts">Account: [All Accounts]</Account>
            <Dot />
          </DocBar>

          <Work>
            <Left>
              <Toolbar>
                <Label htmlFor="symbol">Symbol</Label>
                <Select id="symbol" w={52} value="SPX" />
                <Label htmlFor="position">Open Position (1)</Label>
                <Select id="position" w={138} value="#1016 SPX 23-day Narrow Cal" />
                <ToolActions>
                  <SmallButton $off><I><rect width="9" height="11" fill="#c9c9c9" /><path d="M8 4v8M4 8h8" stroke="#aaa" strokeWidth="2.500" /></I>Commit</SmallButton>
                  <span />
                  <button aria-label="Search"><svg width="13" height="13"><path d="M8.500 8.500 12 12" stroke="#c9a14a" strokeWidth="2.500" /><circle cx="5.500" cy="5.500" r="4.500" fill="#a7cdf0" stroke="#5a86bd" strokeWidth="1.300" /></svg></button>
                  <button aria-label="Layout"><svg width="13" height="13"><rect x=".5" y="3.500" width="5" height="6" fill="#9bc54a" stroke="#5f8a24" /><rect x="7.500" y="1.500" width="5" height="10" fill="#fff" stroke="#6d8fbd" /><path d="M8 5h4M8 8h4M6.500 0v13" stroke="#6d8fbd" /></svg></button>
                  <button aria-label="Close position"><svg width="13" height="13"><circle cx="6.500" cy="6.500" r="6" fill="#c4232f" stroke="#8f1822" /><path d="M4 4l5 5M9 4l-5 5" stroke="#fff" strokeWidth="1.800" /></svg></button>
                  <span />
                  <button aria-label="Options"><svg width="13" height="13"><Gear x={6.5} y={6.5} r={6} fill="#73799a" /></svg></button>
                </ToolActions>
              </Toolbar>

              <Quotes>
                <DataTable>
                  <colgroup>{[38, 38, 37, 39, 38, 37, 37, 40, 33, 36, 46].map((w, i) => <col key={i} style={{ width: w }} />)}</colgroup>
                  <thead><tr>{['Open', 'High', 'Low', 'Last', 'Chg', 'Chg%', 'IV', 'IV Chg', 'Model', 'SD', 'Position'].map(t => <th key={t}>{t}</th>)}</tr></thead>
                  <tbody><tr><td>6025....</td><td>6063....</td><td>6003....</td><td><Red>6054.31</Red></td><td><Red>-14.19</Red></td><td>-0.23%</td><td>11.14</td><td>-11%</td><td /><td>-0.36</td><td /></tr></tbody>
                </DataTable>
                <DataTable>
                  <thead><tr>{['DIT', 'SD', 'IVChg%', 'CurrMa...', 'PnL%'].map(t => <th key={t}>{t}</th>)}</tr></thead>
                  <tbody><tr><td>0</td><td>0</td><td>-0.09%</td><td>2,347.80</td><td>-2.89%</td></tr></tbody>
                </DataTable>
              </Quotes>
              <Grip $h={9}><Dots /></Grip>

              <Chain>
                <ArrowHead>
                  <button aria-label="Previous"><svg width="11" height="11"><path d="M10 .5v10L1 5.500z" fill="#7fb0df" stroke="#5b84b3" /></svg></button>
                  <button aria-label="Next"><svg width="11" height="11"><path d="M1 .5v10l9-5z" fill="#7fb0df" stroke="#5b84b3" /></svg></button>
                </ArrowHead>
                <ExpiryHead $lead={55} $end={8}><span>Weekly</span><span>07 Mar 25 (23)</span><span>12.61%</span></ExpiryHead>
                <ExpiryHead $lead={55} $end={8}><span>Weekly</span><span>10 Mar 25 (26)</span><span>12.18%</span></ExpiryHead>
                <ExpiryHead $lead={38} $end={13}><span /><span>11 Mar 25 (27)</span><span>12.27%</span></ExpiryHead>
                <Strikes title="CALLS" rows={calls} h={175} />
                <Legs rows={calls} i={1} h={175} before={0} />
                <Legs rows={calls} i={2} h={175} before={0} />
                <Legs rows={calls} i={3} h={175} before={39} />
              </Chain>
              <Grip $h={9}><Dots /></Grip>
              <Chain>
                <Strikes title="PUTS" rows={puts} h={182} />
                <Legs rows={puts} i={1} h={182} before={0} />
                <Legs rows={puts} i={2} h={182} before={0} />
                <Legs rows={puts} i={3} h={182} before={44} />
              </Chain>
              <Grip $h={9}><Dots /></Grip>

              <AnalysisBar>
                <Label htmlFor="analysis">Trade Analysis</Label>
                <Select id="analysis" w={120} value="Combined" />
                <Select id="mode" w={64} value="Auto" />
                <Ignore><Check type="checkbox" />Ignore Today's Trades</Ignore>
              </AnalysisBar>
              <AnalysisWrap>
                <DataTable>
                  <thead><tr>{analysisHead.map(t => <th key={t}>{t}</th>)}</tr></thead>
                  <tbody>
                    <tr>
                      <td><NameCell $c="#2479bd"><Expander />Position</NameCell></td>
                      <td>2,347.80</td><td>-2,347.80</td><td>2,280.00</td><td>7.80</td><td><Red>-67.80</Red></td><td><Red>-2.89%</Red></td>
                      <td>1.29</td><td>-0.07</td><td>95.46</td><td>295.27</td><td>74</td>
                      <td><Check type="checkbox" defaultChecked aria-label="Plot position" /></td>
                    </tr>
                    <tr>
                      <td><NameCell $c="#1f9a32"><Expander dim />Model</NameCell></td>
                      <td /><td /><td /><td /><td /><td />
                      <td>0.00</td><td>0.00</td><td>0.00</td><td>0.00</td><td>0</td>
                      <td><Check type="checkbox" aria-label="Plot model" /></td>
                    </tr>
                  </tbody>
                </DataTable>
              </AnalysisWrap>
              <SideGrip><svg width="2" height="14">{[0, 3, 6, 9].map(y => <rect key={y} y={y} width="2" height="1.500" fill="#777" />)}</svg></SideGrip>
            </Left>

            <Right>
              <PaneTabs>
                <PaneTab $w={57} $on>Risk Chart</PaneTab>
                <PaneTab $w={60}>Price Chart</PaneTab>
                <PaneTab $w={91}>Movement Analysis</PaneTab>
                <PaneTab $w={50}>Volatility</PaneTab>
                <PaneTab $w={115}>Statistics &amp; Fundamentals</PaneTab>
              </PaneTabs>
              <Controls>
                <Label htmlFor="vol">Vol Adjust</Label>
                <Spin $w={42}><input id="vol" defaultValue="0" /><SpinArrows><Chevron up /><Chevron /></SpinArrows></Spin>
                <Label htmlFor="theo">Theo Price</Label>
                <Spin $w={64}><input id="theo" defaultValue="6054.31" /><SpinArrows><Chevron up /><Chevron /></SpinArrows></Spin>
                <Projection>
                  <Line $gap={4}><Label htmlFor="proj">Projection</Label><Select id="proj" w={72} value="2/12/2025" /></Line>
                  <FlatButton $w={27}>T+0</FlatButton>
                  <FlatButton $w={20}>1Ln</FlatButton>
                  <FlatButton $w={13} aria-label="Earlier"><svg width="4" height="6"><path d="M4 0v6L0 3z" fill="#555" /></svg></FlatButton>
                  <FlatButton $w={8} aria-label="Later"><svg width="4" height="6"><path d="M0 0v6l4-3z" fill="#555" /></svg></FlatButton>
                </Projection>
              </Controls>
              <RiskChart />
              <StatusBar>
                <span>200%</span>
                <svg width="98" height="10" stroke="#fff" fill="none"><path d="M0 5.500h5M12 5.500h76M94 5.500h6M97 3v5" /><rect x="48.500" y="2" width=".5" height="7" /><rect x="57" y="2" width="1.500" height="7" /></svg>
                <Watermark><strong>Activate Windows</strong>Go to Settings to activate Windows</Watermark>
              </StatusBar>
            </Right>
          </Work>
        </Window>
      </Screen>
    </>
  );
}
